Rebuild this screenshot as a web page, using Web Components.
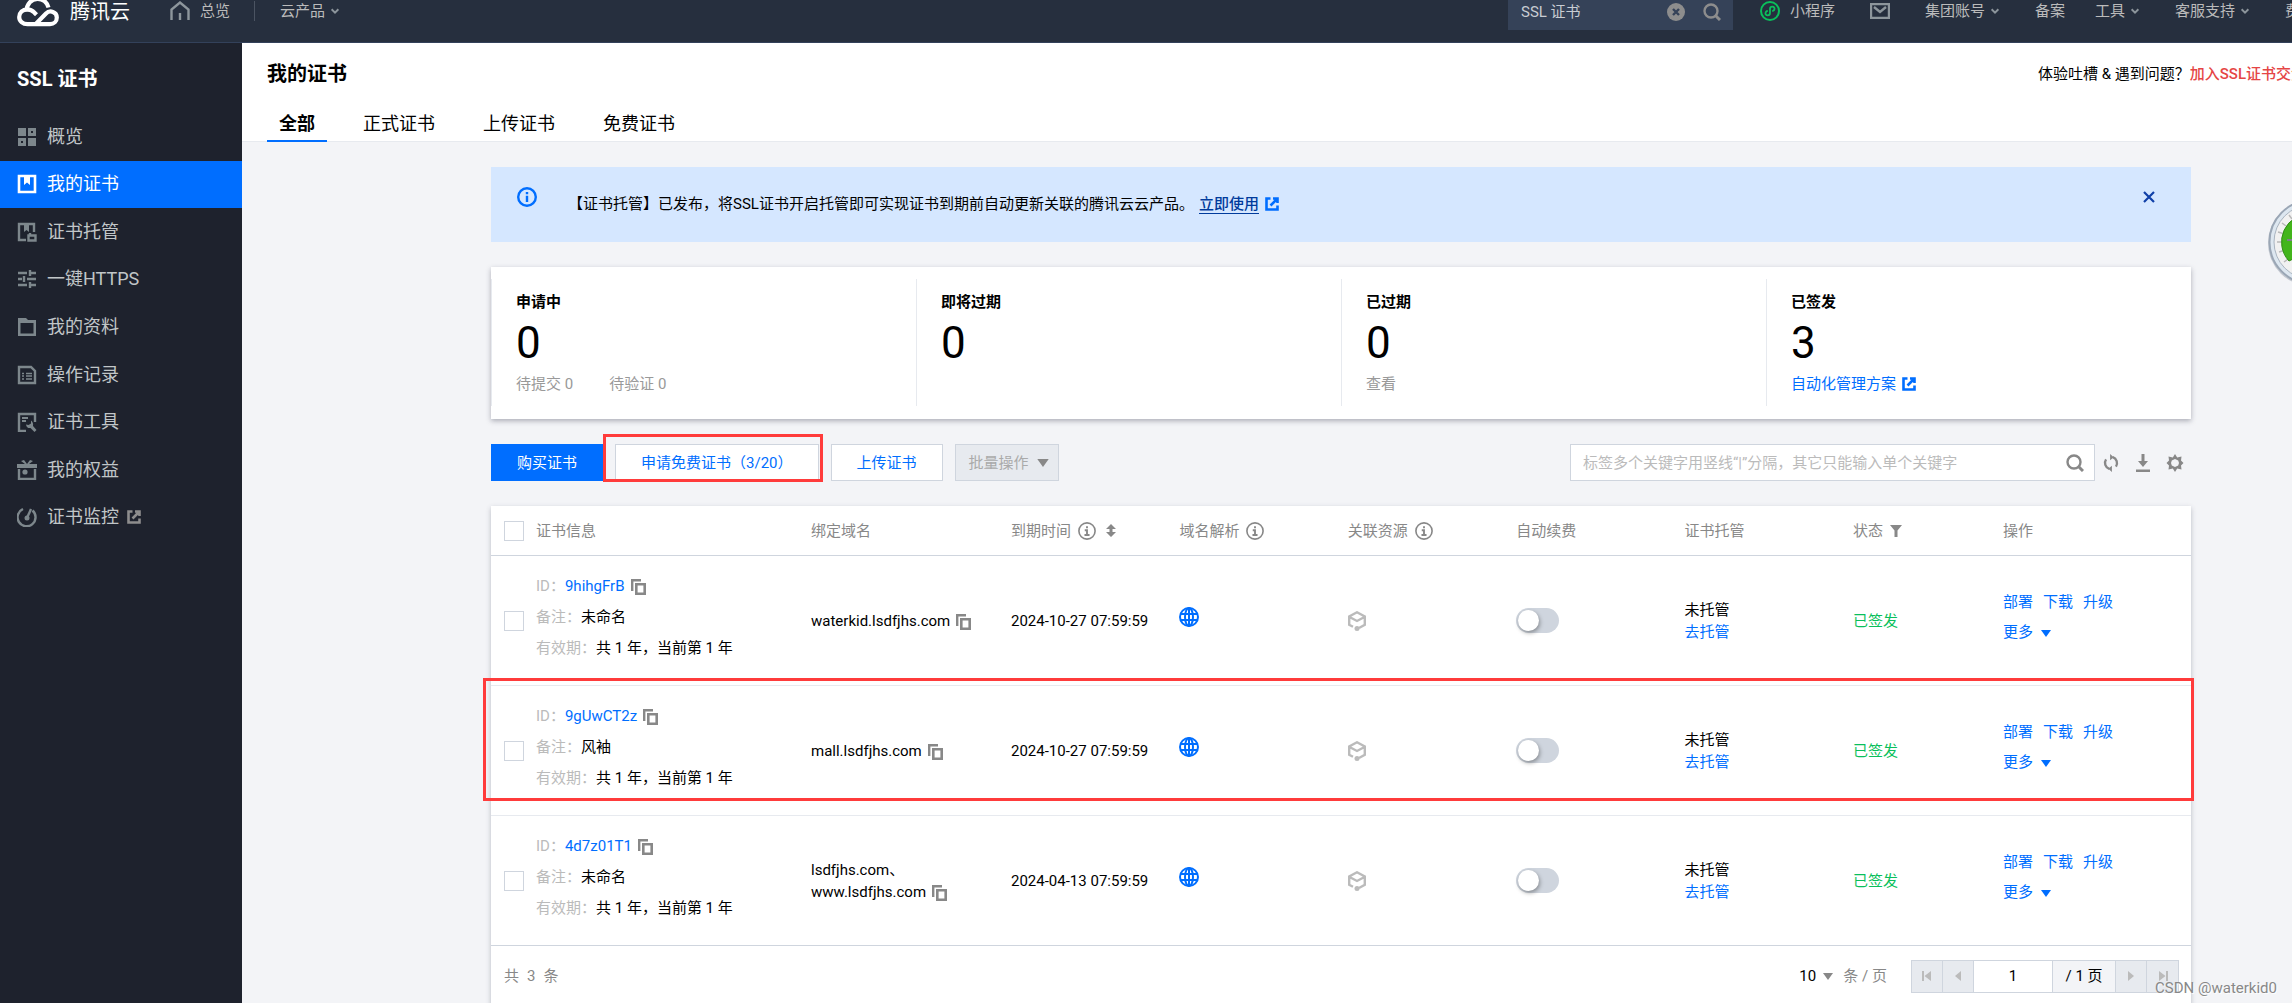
<!DOCTYPE html>
<html lang="zh-CN">
<head>
<meta charset="utf-8">
<title>SSL 证书 - 我的证书</title>
<style>
  html, body { margin: 0; height: 100%; }
  body {
    font-family: Roboto, "Noto Sans CJK SC", sans-serif;
    font-size: 15px;
    line-height: 22px;
    color: #000;
    overflow: hidden;
    --blue: #006eff;
    --line: #cfd5de;
    --muted: #888;
  }
</style>
</head>
<body>
<ssl-console></ssl-console>
<script>
const ICONS = {
  logo: ['0 0 42 28', '<g fill="none" stroke="#fff" stroke-width="4.200"><path d="M9.500 11.500C9.500 4 14.500-1 20.500-1c5.500 0 9.500 3.500 11 8.500"/><path d="M18.500 24.200L29 13.500c4-4 10.800-1.500 10.800 4 0 4-3 6.700-6.800 6.700H10.500c-4.800 0-8.300-3-8.300-7.200 0-4.500 3.500-7.700 8-7.700 3 0 5.300 1.200 7.300 3.400l2 2"/></g>'],
  home: ['0 0 20 20', '<path d="M1.500 19V8.500L10 1.500l8.500 7V19M10 12v7" fill="none" stroke="currentColor" stroke-width="2.400"/>'],
  caret: ['0 0 8 8', '<path d="M1 2l3 3 3-3" fill="none" stroke="currentColor" stroke-width="1.700"/>'],
  clear: ['0 0 18 18', '<circle cx="9" cy="9" r="9" fill="currentColor"/><path d="M6 6l6 6M12 6l-6 6" stroke="#354258" stroke-width="2.400"/>'],
  search: ['0 0 18 18', '<circle cx="8" cy="8" r="6.500" fill="none" stroke="currentColor" stroke-width="2.400"/><path d="M12.500 12.500L17 17" stroke="currentColor" stroke-width="3"/>'],
  mini: ['0 0 20 20', '<circle cx="10" cy="10" r="9" fill="none" stroke="#0abf5b" stroke-width="2"/><path d="M7.800 9.800C5 10.200 4.500 14.300 7.600 14.300 9.300 14.300 10 13 10 12V8c0-1.200.8-2.300 2.400-2.300 3.100 0 2.600 4.100-.2 4.500" fill="none" stroke="#0abf5b" stroke-width="1.800"/>'],
  mail: ['0 0 20 16', '<path d="M1 1h18v14H1z" fill="none" stroke="currentColor" stroke-width="2.400"/><path d="M4 4l6 5 6-5" fill="none" stroke="currentColor" stroke-width="2.400"/>'],
  grid: ['0 0 20 20', '<path d="M1 1h8v8H1zM11 11h8v8h-8z" fill="currentColor"/><path d="M12.500 2.500h5v5h-5zM2.500 12.500h5v5h-5z" fill="none" stroke="currentColor" stroke-width="3"/>'],
  cert: ['0 0 20 20', '<path d="M2 2h16v16H2z" fill="none" stroke="currentColor" stroke-width="2.600"/><path d="M7 3h6v8l-3-2.500L7 11z" fill="currentColor"/>'],
  host: ['0 0 20 20', '<path d="M9 18H2V2h15v8" fill="none" stroke="currentColor" stroke-width="2.400"/><path d="M7 2h5v8L9.500 8 7 10z" fill="currentColor"/><path d="M11.500 13.500h7v5h-7zM13 13v-2" fill="none" stroke="currentColor" stroke-width="2.400"/>'],
  sliders: ['0 0 20 20', '<path d="M1 4h9M13 1v6M13 4h6M1 10h4M7 7v6M10 10h9M1 16h9M13 13v6M13 16h6" fill="none" stroke="currentColor" stroke-width="2.400"/>'],
  folder: ['0 0 20 20', '<path d="M1 1h8l2 2h8v16H1z M3.500 6v10.500h13V6z" fill-rule="evenodd" fill="currentColor"/>'],
  log: ['0 0 20 20', '<path d="M2 2h12l4 4v12H2z" fill="none" stroke="currentColor" stroke-width="2.400"/><path d="M5 8.500h2M9 8.500h6M5 11h2M9 11h6M5 14h2M9 14h6" stroke="currentColor" stroke-width="1.700"/>'],
  tool: ['0 0 20 20', '<path d="M9 19H2V2h16v8" fill="none" stroke="currentColor" stroke-width="2.400"/><path d="M5 6h6M5 9h4" stroke="currentColor" stroke-width="2"/><path d="M14 8.500v3l-2.500 1.500-2.500-.5c.5 3 2.500 4 4.500 3.500l4 4 2-2-3.500-4c.5-2.500-.5-4.500-2-5.500z" fill="currentColor"/>'],
  gift: ['0 0 20 20', '<path d="M0 4h20v4H0zM4 1l3-1 3 4H8zM16 1l-3-1-3 4h2z" fill="currentColor"/><path d="M2 9v10h16V9" fill="none" stroke="currentColor" stroke-width="2.400"/><circle cx="8" cy="12" r="2.600" fill="currentColor"/>'],
  monitor: ['0 0 20 20', '<path d="M6 2A9 9 0 1 0 15.500 3.500" fill="none" stroke="currentColor" stroke-width="2.400"/><circle cx="10" cy="11" r="2.500" fill="currentColor"/><path d="M10 11l4-9" stroke="currentColor" stroke-width="2.400"/>'],
  ext: ['0 0 14 14', '<path d="M5.500 1.500h-4v11h11v-4M8 1.500h4.500V6M12 2L5.500 8.500" fill="none" stroke="currentColor" stroke-width="2.600"/>'],
  info: ['0 0 20 20', '<circle cx="10" cy="10" r="8.800" fill="none" stroke="currentColor" stroke-width="2.400"/><path d="M10 5v2.200M10 8.800V15" stroke="currentColor" stroke-width="2.400"/>'],
  infoserif: ['0 0 20 20', '<circle cx="10" cy="10" r="9" fill="none" stroke="currentColor" stroke-width="1.800"/><path d="M10 4.800V7M7.500 9.200H10V14M7.200 14.500h5.600" fill="none" stroke="currentColor" stroke-width="2.100"/>'],
  close: ['0 0 12 12', '<path d="M1 1l10 10M11 1L1 11" stroke="currentColor" stroke-width="2.200"/>'],
  down: ['0 0 10 7', '<path d="M0 0h10L5 7z" fill="currentColor"/>'],
  refresh: ['0 0 18 20', '<path d="M7 16.500A7 7 0 0 1 3.500 6M11 3.500A7 7 0 0 1 14.500 14" fill="none" stroke="currentColor" stroke-width="2.600"/><path d="M8 0v7l4-3.500zM10 13v7l-4-3.500z" fill="currentColor"/>'],
  download: ['0 0 16 18', '<path d="M8 0v9" stroke="currentColor" stroke-width="3"/><path d="M3 7h10l-5 6zM1 15.500h14V18H1z" fill="currentColor"/>'],
  gear: ['0 0 18 18', '<path d="M9 0l2.200 3.400L15.500 2.500l-.5 4L17.500 9 15 11.500l.5 4-4.300-.9L9 18l-2.200-3.400-4.300.9.500-4L.5 9 3 6.500l-.5-4 4.300.9zM9 5L5.800 6.500 5 9l.8 2.500L9 13l3.200-1.500L13 9l-.8-2.500z" fill-rule="evenodd" fill="currentColor"/>'],
  sort: ['0 0 10 13', '<path d="M5 0l5 5H6.500v3H10l-5 5-5-5h3.500V5H0z" fill="currentColor"/>'],
  filter: ['0 0 12 12', '<path d="M0 0h12L7.500 5.500V12h-3V5.500z" fill="currentColor"/>'],
  copy: ['0 0 15 16', '<path d="M1.200 12V1.200H10" fill="none" stroke="currentColor" stroke-width="2.400"/><path d="M5.300 5.300h8.400v9.400H5.300z" fill="none" stroke="currentColor" stroke-width="2.600"/>'],
  globe: ['0 0 20 20', '<g fill="none" stroke="currentColor" stroke-width="2"><circle cx="10" cy="10" r="9"/><ellipse cx="10" cy="10" rx="4" ry="9"/><path d="M1 7h18M1 13h18M10 1v18"/></g>'],
  cube: ['0 0 18 20', '<path d="M5 15.800L1.200 13.800V5.500L9 1.300l7.800 4.200v8.300L11 17M1.500 6L9 10l7.500-4" fill="none" stroke="currentColor" stroke-width="2.400"/><circle cx="9" cy="17.500" r="2.500" fill="currentColor"/>'],
  first: ['0 0 10 10', '<path d="M0 0h2v10H0zM9 0v10L2.500 5z" fill="currentColor"/>'],
  prev: ['0 0 10 10', '<path d="M8 0v10L2 5z" fill="currentColor"/>'],
  next: ['0 0 10 10', '<path d="M2 0v10l6-5z" fill="currentColor"/>'],
  last: ['0 0 10 10', '<path d="M8 0h2v10H8zM1 0v10l6.500-5z" fill="currentColor"/>'],
  gauge: ['0 0 88 88', '<circle cx="44" cy="45" r="43" fill="#c3c8d0"/><circle cx="44" cy="44" r="41.500" fill="#dde7f0" stroke="#9aa6b5" stroke-width="2"/><circle cx="44" cy="44" r="37" fill="#f1f1f1" stroke="#a9b4c0" stroke-width="1"/><g stroke="#b9b9b9" stroke-width="1.500"><path d="M10 44h5M11 34l5 1.500M15 25l4 3M22 17l3 4M12 54l5-1.500M17 64l4-3"/></g><path d="M22 63A28 28 0 0 1 44 16V36L28 60z" fill="#43b51b" stroke="#2f8d12" stroke-width="1"/><path d="M20 42h14" stroke="#7d8288" stroke-width="2"/><path d="M26 72h20v12H26z" fill="#4a5563"/>']
};

const define = (name, css, html) => customElements.define(name, class extends HTMLElement {
  constructor() {
    super();
    this.attachShadow({ mode: 'open' });
  }
  connectedCallback() {
    const markup = typeof html === 'function' ? html(this) : html;
    this.shadowRoot.innerHTML = `<style>*{box-sizing:border-box}a{color:inherit;text-decoration:none}button,input,select{font:inherit;color:inherit;margin:0;padding:0;border:0;border-radius:0;background:none;outline:0}${css}</style>${markup}`;
  }
});

const icon = (name, w, h = w) => `<ui-icon name="${name}" style="width:${w}px;height:${h}px"></ui-icon>`;

define('ui-icon', ':host{display:inline-block;flex:none}svg{display:block;width:100%;height:100%}',
  el => { const [box, body] = ICONS[el.getAttribute('name')]; return `<svg viewBox="${box}" aria-hidden="true">${body}</svg>`; });

define('top-bar', `
  :host{display:flex;height:43px;flex:none;background:#262f3e;border-bottom:1px solid #33415a;color:#bbb;overflow:hidden;white-space:nowrap}
  a,.find{display:flex;align-items:center;flex:none;height:22px}
  .brand{color:#fff;font-size:20px;gap:11px;margin:0 40px 0 17px;height:24px}
  .brand ui-icon{align-self:flex-start}
  .home{gap:10px;color:#bbb}
  .home ui-icon,.mail{color:#8d969c}
  .sep{width:1px;height:20px;background:#4b5462;margin:1px 25px 0 24px;flex:none}
  .drop{gap:5px}
  .drop ui-icon{color:#8d969c;padding-top:1px}
  .grow{flex:1}
  .find{width:225px;height:30px;padding:0 12px 7px 13px;background:#354258;gap:18px;color:#8d8d8d}
  .find input{flex:1;min-width:0;color:#c8ccd2}
  nav{display:flex;flex:0 0 559px;overflow:hidden;padding-left:27px}
`, `
  <a class="brand" href="#">${icon('logo', 42, 28)}<span>腾讯云</span></a>
  <a class="home" href="#">${icon('home', 20)}总览</a><span class="sep"></span>
  <a class="drop" href="#">云产品${icon('caret', 10)}</a>
  <span class="grow"></span>
  <label class="find"><input value="SSL 证书" aria-label="搜索">${icon('clear', 18)}${icon('search', 18)}</label>
  <nav>
    <a href="#" style="gap:10px;margin-right:35px">${icon('mini', 20)}小程序</a>
    <a class="mail" href="#" aria-label="消息" style="margin-right:35px">${icon('mail', 20, 16)}</a>
    <a class="drop" href="#" style="margin-right:35px">集团账号${icon('caret', 10)}</a>
    <a href="#" style="margin-right:30px">备案</a>
    <a class="drop" href="#" style="margin-right:35px">工具${icon('caret', 10)}</a>
    <a class="drop" href="#" style="margin-right:35px">客服支持${icon('caret', 10)}</a>
    <a href="#">费用</a>
  </nav>`);

define('side-item', `
  :host{display:block}
  a{display:flex;align-items:center;gap:10px;height:100%;padding-left:17px;font-size:18px;color:#c1c6c8}
  ui-icon{color:#7d878c}
  ui-icon[name=ext]{color:#8d8d8d;margin-left:-2px}
  :host([active]) a{background:var(--blue);color:#fff}
  :host([active]) ui-icon{color:#fff}
`, el => `<a href="#">${icon(el.getAttribute('icon'), 20)}<slot></slot>${el.hasAttribute('external') ? icon('ext', 14) : ''}</a>`);

define('side-nav', `
  :host{display:block;width:242px;flex:none;background:#1e222d}
  h2{margin:0;padding:22px 17px 20px;font-size:20px;line-height:28px;color:#fff}
  nav{display:grid;grid-template-rows:repeat(9,1fr);height:428px}
`, `<h2>SSL 证书</h2><nav>
  <side-item icon="grid">概览</side-item>
  <side-item icon="cert" active>我的证书</side-item>
  <side-item icon="host">证书托管</side-item>
  <side-item icon="sliders">一键HTTPS</side-item>
  <side-item icon="folder">我的资料</side-item>
  <side-item icon="log">操作记录</side-item>
  <side-item icon="tool">证书工具</side-item>
  <side-item icon="gift">我的权益</side-item>
  <side-item icon="monitor" external>证书监控</side-item></nav>`);

define('page-head', `
  :host{display:block;background:#fff;border-bottom:1px solid #e7eaef;padding-left:25px}
  .row{display:flex;align-items:center;justify-content:space-between;padding-top:17px}
  h1{margin:0;font-size:20px;line-height:28px;font-weight:700}
  .help{flex:0 0 254px;overflow:hidden;white-space:nowrap}
  .help a{color:#e54545;font-weight:500}
  nav{display:flex;gap:24px;margin:18px 0 -1px}
  nav a{padding:5px 12px 3px;font-size:18px;line-height:26px;border-bottom:2px solid transparent}
  nav a.on{font-weight:700;border-color:var(--blue)}
`, `<div class="row"><h1>我的证书</h1><div class="help">体验吐槽 &amp; 遇到问题？<a href="#">加入SSL证书交流群</a></div></div>
  <nav><a class="on" href="#">全部</a><a href="#">正式证书</a><a href="#">上传证书</a><a href="#">免费证书</a></nav>`);

define('notice-bar', `
  :host{display:flex;height:75px;padding:20px 36px 0 26px;background:#d5e7ff;color:#000}
  .info{color:var(--blue)}
  p{flex:1;margin:6px 0 0 31px}
  p a{color:#003b9c;font-weight:500;border-bottom:1px solid #003b9c;margin:0 6px 0 5px}
  p ui-icon{color:var(--blue);vertical-align:-2px}
  button{color:#1040a8;align-self:flex-start;margin-top:4px;height:12px;line-height:0}
`, `<span class="info">${icon('info', 20)}</span><p><slot></slot><a href="#">立即使用</a>${icon('ext', 14)}</p><button aria-label="关闭">${icon('close', 12)}</button>`);

define('stat-card', `
  :host{display:block;flex:1;height:127px;padding:12px 24px 0;border-left:1px solid #e7eaef}
  :host(:first-child){border-left-color:transparent}
  h3{margin:0;font-size:15px;line-height:22px;font-weight:700}
  strong{display:block;font-size:44px;line-height:52px;font-weight:400;margin:4px 0 4px}
  div{display:flex;gap:36px;color:#999}
`, el => `<h3>${el.getAttribute('label')}</h3><strong>${el.getAttribute('value')}</strong><div><slot></slot></div>`);

define('stat-panel', `
  :host{display:flex;height:152px;padding-top:12px;background:#fff;box-shadow:0 2px 5px rgba(54,58,80,.38)}
  a{color:var(--blue)} .dim{color:#999}
  ui-icon{margin-left:6px;vertical-align:-2px}
`, `<stat-card label="申请中" value="0"><a class="dim" href="#">待提交 0</a><a class="dim" href="#">待验证 0</a></stat-card>
  <stat-card label="即将过期" value="0"></stat-card>
  <stat-card label="已过期" value="0"><a class="dim" href="#">查看</a></stat-card>
  <stat-card label="已签发" value="3"><a href="#">自动化管理方案${icon('ext', 14)}</a></stat-card>`);

define('tool-bar', `
  :host{display:flex;align-items:center;gap:12px}
  button{height:37px;padding:0 25px;border:1px solid var(--line);background:#fff;color:var(--blue);white-space:nowrap}
  .primary{background:var(--blue);border-color:var(--blue);color:#fff}
  .more{display:flex;align-items:center;gap:8px;padding:0 9px 0 13px;background:#e7eaef;color:#aaa}
  .more ui-icon{color:#888}
  .mark{position:relative}
  .mark::after{content:"";position:absolute;inset:-10px -4px -1px -12px;border:3px solid #ff3b3b;pointer-events:none}
  .find{display:flex;align-items:center;width:525px;height:37px;margin-left:auto;padding:0 10px 0 12px;background:#fff;border:1px solid var(--line);color:#888}
  .find input{flex:1;min-width:0}
  input::placeholder{color:#bbb;opacity:1}
  .acts{display:flex;align-items:center;gap:15px;margin:0 7px 0 -5px;color:#888}
  .acts button{height:18px;padding:0;border:0;background:none;color:#888;line-height:0}
`, `<button class="primary">购买证书</button>
  <span class="mark"><button>申请免费证书（3/20）</button></span>
  <button>上传证书</button>
  <button class="more" disabled>批量操作${icon('down', 12, 8)}</button>
  <label class="find"><input placeholder="标签多个关键字用竖线“|”分隔，其它只能输入单个关键字" aria-label="搜索证书">${icon('search', 18)}</label>
  <span class="acts"><button aria-label="刷新">${icon('refresh', 18)}</button><button aria-label="下载">${icon('download', 16, 18)}</button><button aria-label="设置">${icon('gear', 18)}</button></span>`);

const CERTS = [
  { id: '9hihgFrB', note: '未命名', domains: ['waterkid.lsdfjhs.com'], end: '2024-10-27 07:59:59' },
  { id: '9gUwCT2z', note: '风袖', domains: ['mall.lsdfjhs.com'], end: '2024-10-27 07:59:59', marked: true },
  { id: '4d7z01T1', note: '未命名', domains: ['lsdfjhs.com、', 'www.lsdfjhs.com'], end: '2024-04-13 07:59:59' }
];

define('cert-table', `
  :host{display:block;background:#fff;box-shadow:0 2px 5px rgba(54,58,80,.3)}
  table{width:100%;table-layout:fixed;border-collapse:separate;border-spacing:0}
  th,td{padding:0 12px;text-align:left;font-weight:400;white-space:nowrap}
  th{height:50px;color:#888;border-bottom:1px solid var(--line)}
  th ui-icon{vertical-align:-4px;margin-left:7px}
  th ui-icon[name=sort]{vertical-align:-1px;margin-left:10px}
  th ui-icon[name=filter]{vertical-align:-1px;margin-left:7px}
  td{height:130px;border-bottom:1px solid #e7eaef}
  tr:last-child td{border-color:var(--line)}
  .pick{padding:0 0 0 13px}
  .pick input{display:block;appearance:none;width:20px;height:20px;border:1px solid var(--line);background:#fff}
  dl{margin:0;padding-bottom:8px;display:grid;grid-auto-rows:31px;align-items:center}
  dl div{display:flex}
  dt{color:#bbb}dd{margin:0}
  a,.link{color:var(--blue)}
  dd button,.dom button{color:#888;margin-left:6px;vertical-align:-4px;line-height:0}
  .up{padding-bottom:8px}
  .globe{color:var(--blue)}.cube{color:#bbb}
  .globe ui-icon,.cube ui-icon{display:block}
  .switch{display:block;appearance:none;width:43px;height:25px;border-radius:13px;background:var(--line);padding:2px}
  .switch::before{content:"";display:block;width:21px;height:21px;border-radius:50%;background:#fff;box-shadow:1px 2px 4px rgba(0,0,0,.35)}
  .ok{color:#0abf5b}
  .ops{line-height:30px}
  .ops div{display:flex;gap:10px}
  .ops button ui-icon{margin-left:8px}
  .marked{position:relative}
  .marked .pick::after{content:"";position:absolute;inset:-8px -3px 15px -8px;border:3px solid #ff3b3b;pointer-events:none}
`, `<table><colgroup><col style="width:33px"><col style="width:275px"><col style="width:200px"><col><col><col><col><col><col style="width:150px"><col style="width:200px"></colgroup>
  <thead><tr><th class="pick"><input type="checkbox" aria-label="全选"></th><th>证书信息</th><th>绑定域名</th><th>到期时间${icon('infoserif', 18)}${icon('sort', 10, 13)}</th><th>域名解析${icon('infoserif', 18)}</th><th>关联资源${icon('infoserif', 18)}</th><th>自动续费</th><th>证书托管</th><th>状态${icon('filter', 12)}</th><th>操作</th></tr></thead>
  <tbody>${CERTS.map(c => `<tr class="${c.marked ? 'marked' : ''}">
    <td class="pick"><input type="checkbox" aria-label="选择 ${c.id}"></td>
    <td><dl><div><dt>ID：</dt><dd><a href="#">${c.id}</a><button aria-label="复制">${icon('copy', 15, 16)}</button></dd></div>
      <div><dt>备注：</dt><dd>${c.note}</dd></div><div><dt>有效期：</dt><dd>共 1 年，当前第 1 年</dd></div></dl></td>
    <td class="dom">${c.domains.join('<br>')}<button aria-label="复制">${icon('copy', 15, 16)}</button></td>
    <td>${c.end}</td>
    <td><div class="globe up">${icon('globe', 20)}</div></td>
    <td><div class="cube">${icon('cube', 18, 20)}</div></td>
    <td><input class="switch" type="checkbox" role="switch" aria-label="自动续费"></td>
    <td>未托管<br><a href="#">去托管</a></td>
    <td class="ok">已签发</td>
    <td class="ops"><div><a href="#">部署</a><a href="#">下载</a><a href="#">升级</a></div><div class="up"><button class="link">更多${icon('down', 10, 7)}</button></div></td>
  </tr>`).join('')}</tbody></table><pager-bar></pager-bar>`);

define('pager-bar', `
  :host{display:flex;align-items:center;height:60px;padding:0 12px 0 13px;color:#888}
  .total{display:flex;gap:8px;flex:1}
  label{display:flex;align-items:center;margin-right:24px}
  select{appearance:none;color:#000;width:24px}
  label ui-icon{margin-right:10px}
  .box{display:flex;height:33px;border:1px solid var(--line);background:#e7eaef}
  .box>*{border-right:1px solid var(--line)}
  .box>:last-child{border:0}
  .box button{width:31px;display:grid;place-items:center;color:#bbb}
  .box input{width:79px;background:#fff;text-align:center;color:#000}
  .box span{width:63px;display:grid;place-items:center;background:#f3f4f7;color:#000}
`, `<span class="total"><span>共</span><span>3</span><span>条</span></span>
  <label><select aria-label="每页条数"><option>10</option><option>20</option></select>${icon('down', 10, 7)}条 / 页</label>
  <div class="box"><button disabled aria-label="首页">${icon('first', 10)}</button><button disabled aria-label="上一页">${icon('prev', 10)}</button><input value="1" aria-label="页码"><span>/ 1 页</span><button disabled aria-label="下一页">${icon('next', 10)}</button><button disabled aria-label="末页">${icon('last', 10)}</button></div>`);

define('ssl-console', `
  :host{display:flex;flex-direction:column;height:100vh;overflow:hidden;position:relative}
  .body{display:flex;flex:1;min-height:0}
  main{flex:1;min-width:0;background:#f3f4f7;overflow:hidden}
  .content{display:flex;flex-direction:column;gap:25px;padding:25px 101px 0 249px}
  .gauge{position:absolute;top:198px;right:-63px}
  .stamp{position:absolute;right:15px;bottom:4px;font-size:15px;color:#888;text-shadow:1px 1px 1px #fff}
`, `<top-bar></top-bar><div class="body"><side-nav></side-nav><main><page-head></page-head>
  <div class="content"><notice-bar>【证书托管】已发布，将SSL证书开启托管即可实现证书到期前自动更新关联的腾讯云云产品。</notice-bar>
  <stat-panel></stat-panel><tool-bar></tool-bar><cert-table></cert-table></div></main></div>
  <span class="gauge">${icon('gauge', 88)}</span><span class="stamp">CSDN @waterkid0</span>`);
</script>
</body>
</html>
